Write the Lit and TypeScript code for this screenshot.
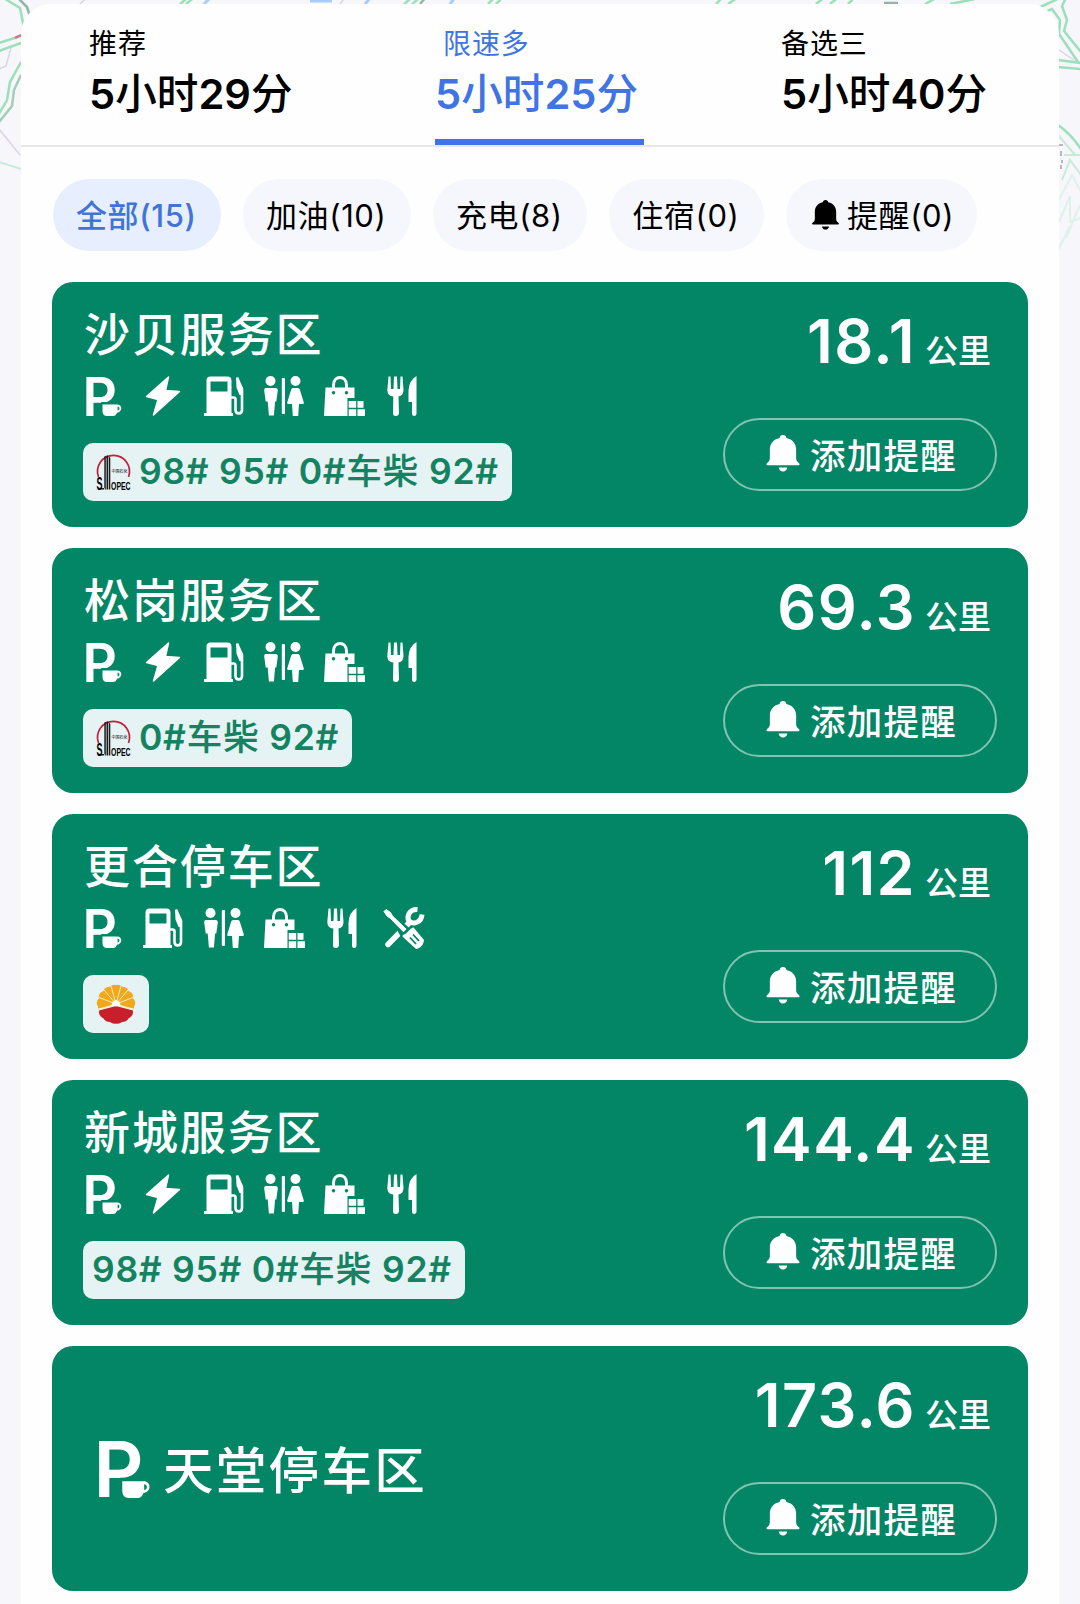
import { LitElement, css, html, svg, nothing } from 'lit';
import { property, customElement, state } from 'lit/decorators.js';

const icons = {
    parking: svg`
      <text class="letter" x="-.4" y="39.5" font-size="53.5">P</text>
      <path class="gap" d="M18.500 26.500h18V41h-18z"/>
      <path fill-rule="evenodd" d="M19.500 28.500h14.700c5.500 0 5.500 7.500-.2 8.200-.6 2-2 3.300-4 3.300h-6c-3 0-4.500-2-4.500-5z
        M34.600 30.500v4c2.500-.2 2.500-3.900 0-4z"/>`,
    bolt: svg`<path stroke="currentColor" stroke-width="1.500" stroke-linejoin="round" d="M25.500 1 3.500 20.500 15 23.500 10.500 39 36.500 15.500 22.500 14.500z"/>`,
    fuel: svg`
      <path fill-rule="evenodd" d="M2.500 37V4.500C2.500 2 4 .5 6.500.500h17c2.500 0 4 1.500 4 4V37h1.500v3H0v-3zM6.500 5.500v10h17v-10z"/>
      <path fill="none" stroke="currentColor" stroke-width="2.600" d="M27 21.500h2.500q2 0 2 2V34c0 4.500 6.500 4.500 6.500 0V13L33 1.500"/>
      <path d="M32 1 39 12v7h-3.500l-3-7.500z"/>`,
    restroom: svg`
      <circle cx="6.500" cy="5" r="5"/>
      <path d="M1.500 12h10q2.500 0 2.300 2.500l-1.500 11h-1.200l-1.200 14h-5l-1.200-14H1.700l-1.500-11Q0 12 1.500 12z"/>
      <rect x="17.800" y="2" width="3.200" height="36" rx="1"/>
      <circle cx="31.500" cy="5" r="5"/>
      <path d="M29 12h5q1.300 0 1.800 1.500l4 13q.3 1.500-1.300 1.500H35l-.8 12h-5.400L28 28h-3.500q-1.600 0-1.300-1.500l4-13Q27.700 12 29 12z"/>`,
    shop: svg`
      <path fill="none" stroke="currentColor" stroke-width="3" d="M9.500 12V9c0-10 13-10 13 0v3"/>
      <path fill-rule="evenodd" d="M1.500 11.500h29V22h-7v18H0zM9.500 15a1.700 1.700 0 1 0 .01 0zM22.500 15a1.700 1.700 0 1 0 .01 0z"/>
      <path d="M24.700 25h7.500v6.800h-7.500zM33.500 25h6v6.800h-6zM24.700 33.200h7.500V40h-7.500zM33.500 33.200H41V40h-7.500z"/>`,
    food: svg`
      <path d="M4.500.500h2L7 13h2.500l.5-12.500h3l.5 12.500H16l.5-12.500h2L19.500 14q0 5.500-5 6.500l.500 17q-.5 2.500-3.200 2.500t-2.800-2.500L9.300 20.500Q3.500 20 3.300 14z"/>
      <path d="M32.500 0v38q-.4 2-2.300 2t-2.200-2V26h-3.500V15Q25 4 32.500 0z"/>`,
    repair: svg`
      <path stroke="currentColor" stroke-width="5.500" stroke-linecap="round" d="M4 36.500 26 14"/>
      <path fill="none" stroke="currentColor" stroke-width="5" d="M33.500 1.500C26 1 22 7.500 25 13.500c5 3.500 12.500.5 13-7"/>
      <path class="gap" stroke-width="3" d="M3 1 23 20l-6 6zM16 23 32 42"/>
      <path stroke="currentColor" stroke-width="1" stroke-linejoin="round" d="M2 1.500 6.500 4.500 8.500 8 22 21l-2.500 2.800L6.500 10.500 3 8 0 3.500z"/>
      <path stroke="currentColor" stroke-width="2" stroke-linejoin="round" d="m19.500 28 3-1.500 5-5L29 20.500 39 32.500q-1 5.500-6.500 7.500L22 30.500z"/>
      <path class="gap" stroke-width="1.800" fill="none" d="m26 29.500 6 6.500m-3-9.500 6 6.500"/>`,
};

const bell = html`<svg class="bell" viewBox="0 0 34 38">
    <path fill="currentColor" d="M17 0c2 0 3.300 1.200 3.500 3C27 4.500 30.500 9 30.500 15v9c0 2.500 1.500 4 3.200 5.200.6 1 .3 1.800-.7 1.800H1c-1 0-1.300-.8-.7-1.800C2 28 3.500 26.500 3.500 24v-9C3.500 9 7 4.500 13.500 3 13.700 1.200 15 0 17 0zM12.500 33.500h9c-.5 2.500-2 4-4.500 4s-4-1.500-4.500-4z"/>
</svg>`;

const brands = {
    sinopec: html`<svg class="sinopec" viewBox="0 0 36 38">
        <path fill="none" stroke="#c3203a" stroke-width="1.700" d="M2.500 24A16 16 0 1 1 32.500 24"/>
        <path fill="#1c1c1c" d="M8.300 36.500V3.500l1.500-.8v33.800zM10.500 36.500V2.500H12v34zM12.700 36.500V3l1.600 2v31.500zM2 36.500h7V35H2z"/>
        <text class="logo-cn" x="15.500" y="20">中国石化</text>
        <text class="logo-s" transform="translate(.5 36.500) scale(.5 1)">S</text>
        <text class="logo-en" transform="translate(15 36.500) scale(.66 1)">OPEC</text>
    </svg>`,
    petrochina: html`<svg class="petrochina" viewBox="-20 -20 40 40">
        <g fill="#f2a81d">
            ${[-176, -148, -121, -98, -82, -59, -32, -4].map((a) => svg`
              <circle cx="${13.5 * Math.cos(a * Math.PI / 180)}" cy="${13.5 * Math.sin(a * Math.PI / 180)}" r="5.800"/>`)}
            <path d="M-18 5V-3L-9-15H9L18-3v8L0 0z"/>
        </g>
        <path fill="#c8202a" d="M-17 6.500 0 2 17 6.500Q17.500 12 12.500 14.500 10.500 18 6 18 3 20.500 0 19.500-3 20.500-6 18-10.500 18-12.500 14.500-17.500 12-17 6.500z"/>
        <path fill="none" stroke="#fdf0cf" stroke-width=".9" d="M0 0-17-6.500M0 0-12-14M0 0-5-18M0 0 5-18M0 0 12-14M0 0 17-6.500"/>
        <path fill="none" stroke="#fdf0cf" stroke-width="1.500" d="M-19 5.800 0 .800 19 5.800"/>
        <path fill="#fff" d="m-4.500 1 1-3L0-4l3.500 2 1 3L0 2.500z"/>
    </svg>`,
};

const routes = [
    { label: '推荐', time: '5小时29分' },
    { label: '限速多', time: '5小时25分' },
    { label: '备选三', time: '5小时40分' },
];

const filters = [
    { label: '全部', count: 15 },
    { label: '加油', count: 10 },
    { label: '充电', count: 8 },
    { label: '住宿', count: 0 },
    { label: '提醒', count: 0, bell: true },
];

const all = ['parking', 'bolt', 'fuel', 'restroom', 'shop', 'food'];

const areas = [
    { name: '沙贝服务区', km: '18.1', icons: all, brand: 'sinopec', fuels: '98# 95# 0#车柴 92#' },
    { name: '松岗服务区', km: '69.3', icons: all, brand: 'sinopec', fuels: '0#车柴 92#' },
    { name: '更合停车区', km: '112', icons: ['parking', 'fuel', 'restroom', 'shop', 'food', 'repair'], brand: 'petrochina' },
    { name: '新城服务区', km: '144.4', icons: all, fuels: '98# 95# 0#车柴 92#' },
    { name: '天堂停车区', km: '173.6', icons: [] },
];

@customElement('service-area-card')
export class ServiceAreaCard extends LitElement {
    @property({ attribute: false }) area;

    static get styles() {
        return css`
          :host {
            display: block;
          }

          .card {
            background: #038665;
            border-radius: 21px;
            box-sizing: border-box;
            color: #fff;
            display: flex;
            height: 245px;
            justify-content: space-between;
            padding: 0 31px;
          }

          .info {
            align-items: flex-start;
            display: flex;
            flex-direction: column;
            padding-top: 25px;
          }

          .name {
            font-size: 46px;
            font-weight: 500;
            letter-spacing: 1.900px;
            line-height: 54px;
            padding-left: 1px;
            white-space: nowrap;
          }

          .icons {
            display: flex;
            gap: 20.300px;
            margin-top: 15px;
          }

          .icon {
            display: block;
            fill: currentColor;
            height: 40px;
            overflow: visible;
            width: 40px;
          }

          .letter {
            font-family: Inter, sans-serif;
            font-weight: 600;
          }

          .gap {
            fill: #038665;
            stroke: #038665;
          }

          .fuel {
            align-items: center;
            background: #e6f3f4;
            border-radius: 10px;
            box-sizing: border-box;
            color: #148362;
            display: flex;
            font-size: 35.500px;
            font-weight: 500;
            gap: 7px;
            height: 58px;
            letter-spacing: 1px;
            line-height: 50px;
            margin-top: 27px;
            padding: 0 13px 0 9px;
            white-space: nowrap;
          }

          .digits {
            font-weight: 600;
            letter-spacing: 0.700px;
          }

          .fuel.branded {
            padding-left: 13px;
          }

          svg.sinopec {
            height: 38px;
            overflow: visible;
            width: 36px;
          }

          svg.petrochina {
            height: 40px;
            width: 40px;
          }

          .logo-cn {
            font-size: 4px;
            font-weight: 400;
            letter-spacing: 0;
          }

          .logo-s {
            font: 700 18px 'Liberation Sans', sans-serif;
            letter-spacing: 0;
          }

          .logo-en {
            font: 700 10.500px 'Liberation Sans', sans-serif;
            letter-spacing: 0;
          }

          .simple {
            align-items: center;
            display: flex;
            gap: 10px;
            padding-left: 11px;
          }

          .simple .icon {
            height: 60px;
            width: 58px;
          }

          .simple .name {
            font-size: 50.500px;
            letter-spacing: 2.300px;
            padding-top: 5px;
          }

          .side {
            align-items: flex-end;
            display: flex;
            flex-direction: column;
            justify-content: space-between;
            padding: 23px 0 36px;
          }

          .distance {
            align-items: baseline;
            display: flex;
            gap: 9px;
            line-height: 72px;
            padding-right: 6px;
          }

          .km {
            font-size: 61px;
            font-weight: 600;
            letter-spacing: 1.400px;
          }

          .unit {
            font-size: 33px;
            font-weight: 500;
          }

          .remind {
            align-items: center;
            background: none;
            border: 2px solid rgba(255, 255, 255, 0.5);
            border-radius: 37px;
            box-sizing: border-box;
            color: inherit;
            display: flex;
            font: inherit;
            font-size: 35.500px;
            font-weight: 500;
            gap: 10px;
            height: 73px;
            justify-content: center;
            letter-spacing: 1.300px;
            padding: 0 0 2px 3px;
            width: 274px;
          }

          .bell {
            height: 37px;
            width: 34px;
          }
    `;
    }

    renderIcon(name) {
        return html`<svg class="icon" viewBox="0 0 40 40">${icons[name]}</svg>`;
    }

    renderFuels(fuels) {
        return fuels.split(/([\d# ]+)/).map((part) => (/\d/.test(part) ? html`<span class="digits">${part}</span>` : part));
    }

    renderInfo() {
        const { name, icons: list, brand, fuels } = this.area;
        if (!list.length) {
            return html`
              <div class="simple">
                ${this.renderIcon('parking')}
                <span class="name">${name}</span>
              </div>`;
        }
        return html`
          <div class="info">
            <span class="name">${name}</span>
            <div class="icons">${list.map((i) => this.renderIcon(i))}</div>
            <div class="fuel ${brand ? 'branded' : ''}">
              ${brand ? brands[brand] : nothing}
              ${fuels ? html`<span>${this.renderFuels(fuels)}</span>` : nothing}
            </div>
          </div>`;
    }

    render() {
        return html`
          <div class="card">
            ${this.renderInfo()}
            <div class="side">
              <div class="distance"><span class="km">${this.area.km}</span><span class="unit">公里</span></div>
              <button class="remind">${bell}<span>添加提醒</span></button>
            </div>
          </div>`;
    }
}

@customElement('app-root')
export class AppRoot extends LitElement {
    @state() route = 1;

    @state() filter = 0;

    static get styles() {
        return css`
          :host {
            background: #f6f6fb;
            box-sizing: border-box;
            display: block;
            font-family: Inter, 'Noto Sans CJK SC', sans-serif;
            height: 1604px;
            overflow: hidden;
            padding: 4px 21px 0;
            position: relative;
          }

          .map {
            fill: none;
            height: 300px;
            left: 0;
            position: absolute;
            top: 0;
            width: 1080px;
          }

          .sheet {
            background: #fefefe;
            border-radius: 30px 30px 0 0;
            height: 1600px;
            position: relative;
          }

          .tabs {
            border-bottom: 2px solid #e8e8ea;
            box-sizing: border-box;
            display: flex;
            height: 143px;
            justify-content: space-between;
            padding: 0 69px 0 68px;
          }

          .tab {
            box-sizing: border-box;
            cursor: pointer;
            display: flex;
            flex-direction: column;
            padding-top: 22px;
            width: 209px;
          }

          .label {
            font-size: 28px;
            letter-spacing: 0.900px;
            line-height: 36px;
          }

          .time {
            font-size: 41.600px;
            font-weight: 500;
            line-height: 65px;
            white-space: nowrap;
          }

          .digits {
            font-weight: 600;
          }

          .tab.active {
            border-bottom: 6px solid #4074e4;
            color: #4074e4;
          }

          .tab.active .label {
            padding-left: 8px;
          }

          .filters {
            display: flex;
            gap: 22px;
            padding: 32px 32px 31px;
          }

          .chip {
            align-items: center;
            background: #f6f7fc;
            border-radius: 36px;
            box-sizing: border-box;
            display: flex;
            font-size: 31px;
            gap: 8px;
            height: 72px;
            letter-spacing: 0.600px;
            padding: 0 24.500px 4px 23px;
            white-space: nowrap;
          }

          .chip.active {
            background: #e7efff;
            color: #4074d8;
            font-weight: 500;
          }

          .chip.reminder {
            padding-left: 26px;
            padding-right: 23px;
          }

          .chip .bell {
            height: 30px;
            margin-top: 3px;
            width: 27px;
          }

          .list {
            display: flex;
            flex-direction: column;
            gap: 21px;
            padding: 0 31px;
          }
    `;
    }

    // digits are set heavier than the units between them
    renderTime(time) {
        return time.split(/(\d+)/).map((part) => (/\d/.test(part) ? html`<span class="digits">${part}</span>` : part));
    }

    render() {
        return html`
          <svg class="map" viewBox="0 0 1080 300">
            <g stroke="#9be0bb" stroke-width="2.500">
              <path d="M5-1 20 8 24 28M-1 43 21 36M-1 51 21 43M21 62 10 82 7 100-1 114"/>
              <path d="M1036 9 1062-3M1040 14 1052 9 1060 20 1059 34 1078 62M1066-2 1062 6 1067 20 1064 31 1081 52M1058 60 1081 63M1058 67 1081 69"/>
              <path d="M1058 125q12 8 23 24M180 4 190-4M186 4 196-4M404 4 414-4M412 4 422-4M488 4 496-4M496 4 504-4"/>
              <path d="M716 4 724-4M728 4 740-4M816 4 826-4M830 4 840-4M848 4 856-4M925 4 940-4M950 4 975-1"/>
            </g>
            <g stroke="#93b5a6" stroke-width="2.500">
              <path d="M19-1 27 7 31 19M420 4 427-4M884 3h14"/>
            </g>
            <path stroke="#a5cdb9" stroke-width="2.500" d="M21 75 14 90 12 106-1 122"/>
            <g stroke="#c6ebd8" stroke-width="2">
              <path d="M-1 162 21 169M1058 135 1076 156M1064 155h17M1062 180 1070 160 1081 175"/>
            </g>
            <g stroke="#dff2ea" stroke-width="2">
              <path d="M1059 200 1072 175 1081 192M1059 222 1070 196 1070 222 1081 218M1066 238 1080 205M1058 250 1070 226"/>
            </g>
            <path stroke="#ddd5e2" stroke-width="1.500" d="M11 48 6 66-1 69M-1 129 20 155M1059 50 1074 60M80 4 88-4M340 4 346-4"/>
            <path stroke="#a8cdf6" stroke-width="3" d="M204 4 212-4M310 1h22M365 4 372-4M450 4 456-4"/>
            <path stroke="#b9b6c2" stroke-width="2" d="M1059 145h4M1061 151v5M1062 160v3M1061 165v4"/>
            <path stroke="#e0707c" stroke-width="2.500" d="m15 38 6-3"/>
          </svg>
          <div class="sheet">
            <div class="tabs">
              ${routes.map((r, i) => html`
                <div class="tab ${i === this.route ? 'active' : ''}" @click="${() => { this.route = i; }}">
                  <span class="label">${r.label}</span>
                  <span class="time">${this.renderTime(r.time)}</span>
                </div>`)}
            </div>
            <div class="filters">
              ${filters.map((f, i) => html`
                <div class="chip ${i === this.filter ? 'active' : ''} ${f.bell ? 'reminder' : ''}" @click="${() => { this.filter = i; }}">
                  ${f.bell ? bell : nothing}<span>${f.label}(${f.count})</span>
                </div>`)}
            </div>
            <div class="list">
              ${areas.map((a) => html`<service-area-card .area="${a}"></service-area-card>`)}
            </div>
          </div>`;
    }
}
